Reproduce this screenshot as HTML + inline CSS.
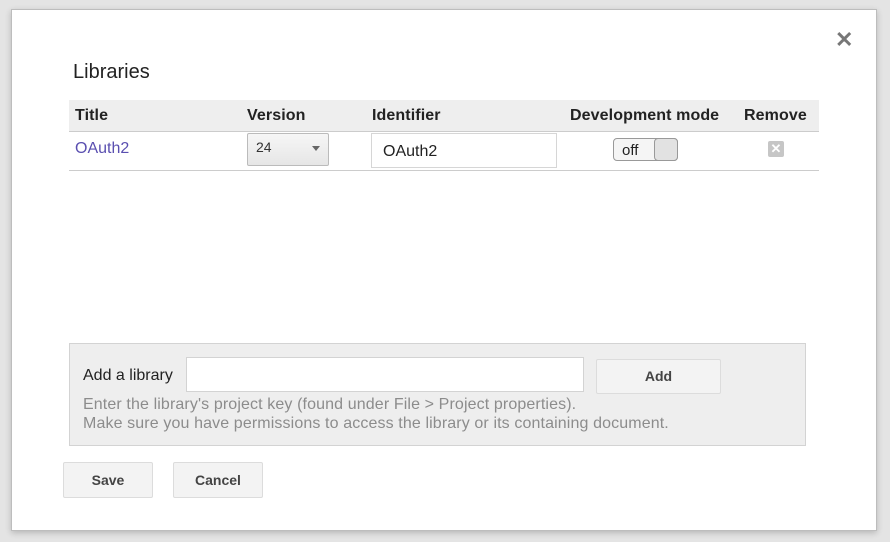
<!DOCTYPE html>
<html><head><style>
body{margin:0;width:890px;height:542px;background:#e4e4e4;font-family:"Liberation Sans",Arial,sans-serif;position:relative;overflow:hidden}
.dlg{position:absolute;left:11px;top:9px;width:864px;height:520px;background:#fff;border:1px solid #bdbdbd;box-shadow:0 2px 6px rgba(0,0,0,.2)}
.a{position:absolute}
.th{font-weight:bold;font-size:16px;color:#222;top:107px;letter-spacing:0.1px}
.btn{position:absolute;background:#f3f3f3;border:1px solid #dcdcdc;border-radius:2px;font-weight:bold;font-size:14px;color:#444;text-align:center;box-sizing:border-box}
</style></head><body>
<div class="dlg"></div>
<div class="a" style="left:835px;top:27px;font-size:22px;font-weight:bold;color:#777">✕</div>
<div class="a" style="left:73px;top:61px;font-size:20px;color:#222">Libraries</div>
<div class="a" style="left:69px;top:100px;width:750px;height:31px;background:#eeeeee;border-bottom:1px solid #ccc"></div>
<div class="a th" style="left:75px">Title</div>
<div class="a th" style="left:247px">Version</div>
<div class="a th" style="left:372px">Identifier</div>
<div class="a th" style="left:570px">Development mode</div>
<div class="a th" style="left:744px">Remove</div>
<div class="a" style="left:69px;top:170px;width:750px;height:1px;background:#ccc"></div>
<div class="a" style="left:75px;top:140px;font-size:16px;color:#5a4fb0">OAuth2</div>
<div class="a" style="left:247px;top:133px;width:82px;height:33px;background:linear-gradient(#f6f6f6,#e6e6e6);border:1px solid #bbb;border-radius:2px;box-sizing:border-box;font-size:14px;color:#333;padding:5px 8px">24<span style="position:absolute;left:64px;top:12px;border:4px solid transparent;border-top:5px solid #666"></span></div>
<div class="a" style="left:371px;top:133px;width:186px;height:35px;border:1px solid #d6d6d6;box-sizing:border-box;font-size:16px;color:#222;padding:9px 11px">OAuth2</div>
<div class="a" style="left:613px;top:138px;width:65px;height:23px;border:1px solid #999;border-radius:4px;box-sizing:border-box;background:#f5f5f5;font-size:15px;color:#222;padding:3px 8px">off<span style="position:absolute;left:40px;top:-1px;width:24px;height:23px;border:1px solid #999;border-radius:4px;box-sizing:border-box;background:#e2e2e2"></span></div>
<div class="a" style="left:768px;top:141px;width:16px;height:16px;background:#c6c6c6;border-radius:2px;color:#fff;font-size:13px;font-weight:bold;text-align:center;line-height:16px">✕</div>
<div class="a" style="left:69px;top:343px;width:735px;height:101px;background:#eeeeee;border:1px solid #d3d3d3"></div>
<div class="a" style="left:83px;top:367px;font-size:16px;color:#222">Add a library</div>
<div class="a" style="left:186px;top:357px;width:398px;height:35px;background:#fff;border:1px solid #d3d3d3;box-sizing:border-box"></div>
<div class="btn" style="left:596px;top:359px;width:125px;height:35px;line-height:33px">Add</div>
<div class="a" style="left:83px;top:395px;font-size:16px;color:#8c8c8c;line-height:19px;letter-spacing:0.12px">Enter the library's project key (found under File &gt; Project properties).<br>Make sure you have permissions to access the library or its containing document.</div>
<div class="btn" style="left:63px;top:462px;width:90px;height:36px;line-height:34px">Save</div>
<div class="btn" style="left:173px;top:462px;width:90px;height:36px;line-height:34px">Cancel</div>
</body></html>
